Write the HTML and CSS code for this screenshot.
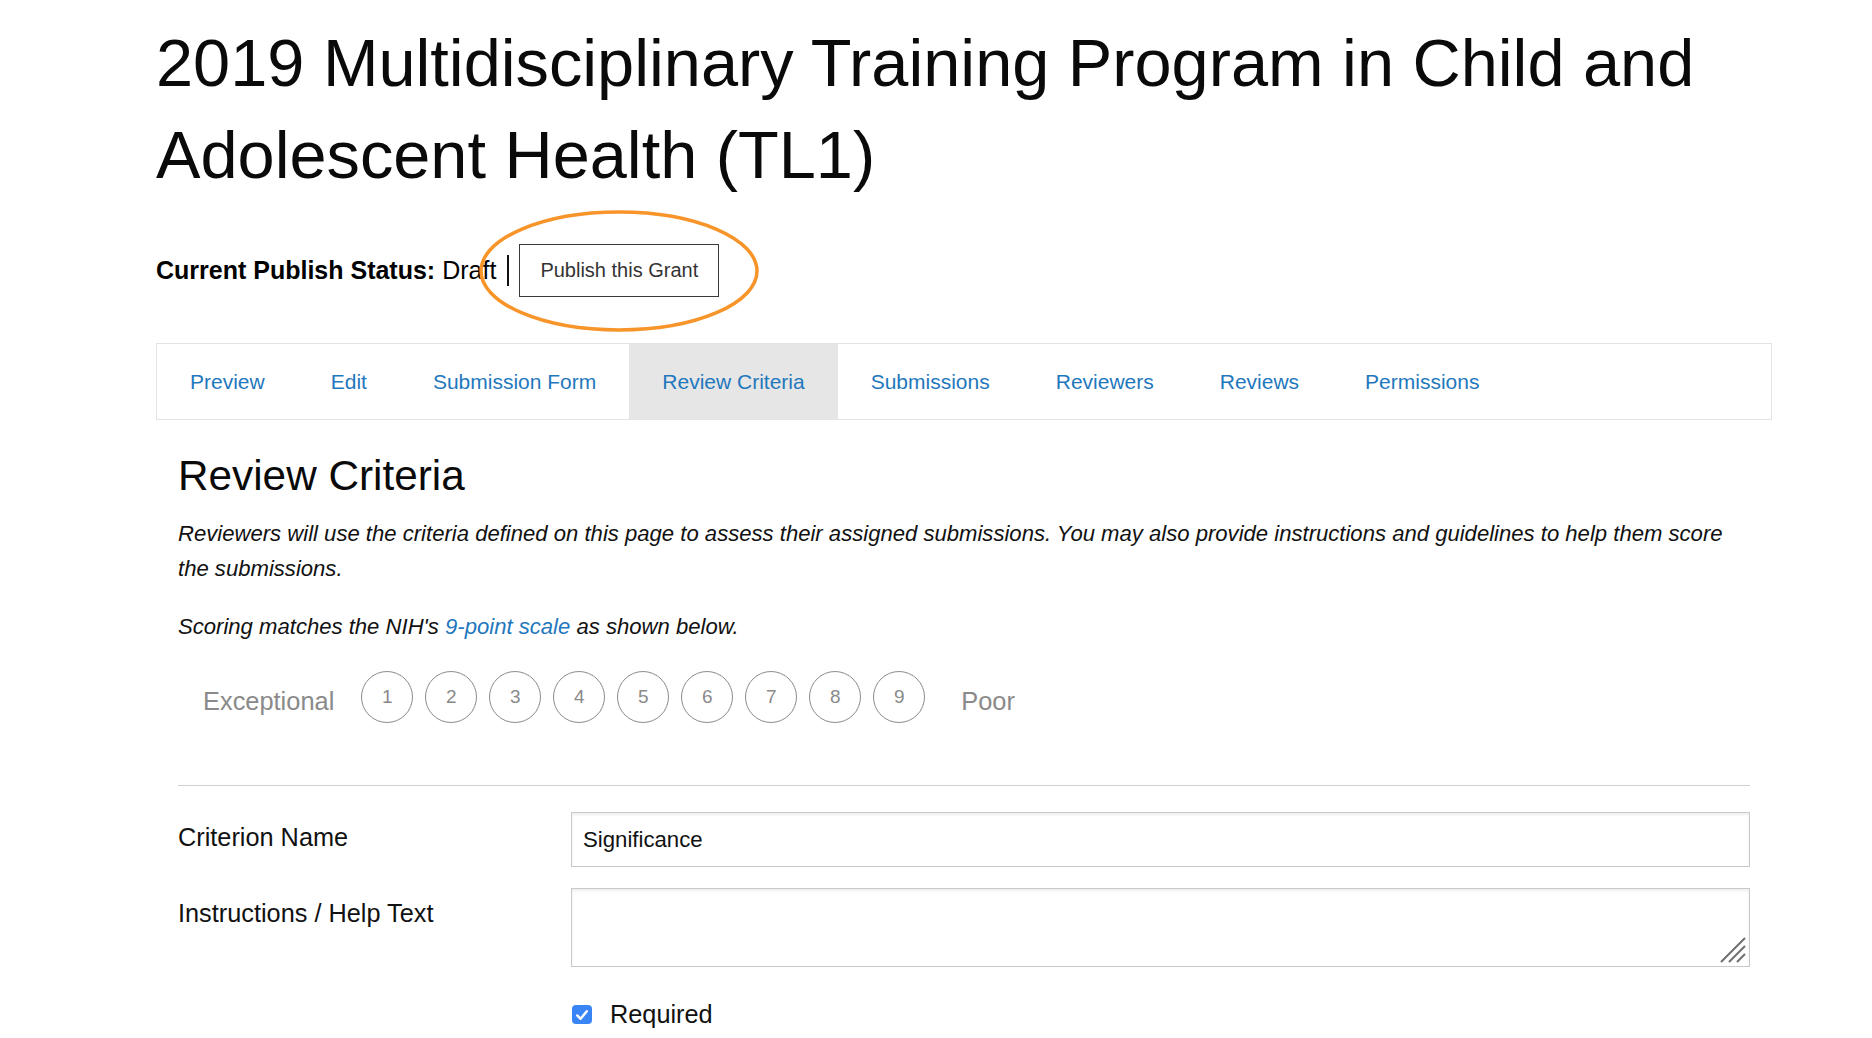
FILE: index.html
```html
<!DOCTYPE html>
<html>
<head>
<meta charset="utf-8">
<title>Review Criteria</title>
<link rel="stylesheet" href="styles.css">
</head>
<body>
<div class="page">
  <h1 class="title">2019 Multidisciplinary Training Program in Child and Adolescent Health (TL1)</h1>

  <div class="status">
    <span class="status-label">Current Publish Status:</span>
    <span class="status-value">Draft</span>
    <span class="sep"></span>
    <span class="publish-wrap">
      <button class="publish-btn" type="button">Publish this Grant</button>
      <svg class="highlight" viewBox="0 0 284 126" width="284" height="126" aria-hidden="true">
        <ellipse cx="142" cy="63" rx="138" ry="59" fill="none" stroke="#f7942a" stroke-width="3.5"/>
      </svg>
    </span>
  </div>

  <nav class="tabs">
    <a class="tab" href="#">Preview</a>
    <a class="tab" href="#">Edit</a>
    <a class="tab" href="#">Submission Form</a>
    <a class="tab active" href="#">Review Criteria</a>
    <a class="tab" href="#">Submissions</a>
    <a class="tab" href="#">Reviewers</a>
    <a class="tab" href="#">Reviews</a>
    <a class="tab" href="#">Permissions</a>
  </nav>

  <section class="content">
    <h2 class="section-title">Review Criteria</h2>
    <p class="intro">Reviewers will use the criteria defined on this page to assess their assigned submissions. You may also provide instructions and guidelines to help them score the submissions.</p>
    <p class="intro scoring">Scoring matches the NIH's <a class="link" href="#">9-point scale</a> as shown below.</p>

    <div class="scale">
      <span class="scale-label">Exceptional</span>
      <div class="dots">
        <span class="dot">1</span>
        <span class="dot">2</span>
        <span class="dot">3</span>
        <span class="dot">4</span>
        <span class="dot">5</span>
        <span class="dot">6</span>
        <span class="dot">7</span>
        <span class="dot">8</span>
        <span class="dot">9</span>
      </div>
      <span class="scale-label poor">Poor</span>
    </div>

    <hr class="divider">

    <div class="form-row first">
      <label class="form-label">Criterion Name</label>
      <input class="field" type="text" value="Significance">
    </div>
    <div class="form-row">
      <label class="form-label">Instructions / Help Text</label>
      <div class="area-wrap">
        <textarea class="field area"></textarea>
        <svg class="grip" viewBox="0 0 28 28" width="28" height="28" aria-hidden="true">
          <path d="M2 26 L26 2 M10 26 L26 10 M18 26 L26 18" stroke="#6f6f6f" stroke-width="2" fill="none"/>
        </svg>
      </div>
    </div>
    <div class="form-row">
      <span></span>
      <div class="check-row">
        <span class="checkbox">
          <svg viewBox="0 0 20 20" width="20" height="20" aria-hidden="true">
            <path d="M5.2 10.4 L8.6 13.8 L14.8 6.2" stroke="#fff" stroke-width="2.4" fill="none" stroke-linecap="round" stroke-linejoin="round"/>
          </svg>
        </span>
        <span class="check-label">Required</span>
      </div>
    </div>
  </section>
</div>
</body>
</html>
```

FILE: styles.css
```css
* { box-sizing: border-box; }

html, body {
  margin: 0;
  padding: 0;
  background: #fff;
}

body {
  font-family: "Liberation Sans", Arial, Helvetica, sans-serif;
  color: #111;
}

.page {
  margin-left: 156px;
  width: 1616px;
}

.title {
  margin: 17px 0 0 0;
  font-size: 66.7px;
  font-weight: 400;
  line-height: 92px;
  color: #0a0a0a;
}

.status {
  margin-top: 43px;
  display: flex;
  align-items: center;
  height: 53px;
  font-size: 25px;
}

.status-label {
  font-weight: 700;
  color: #000;
}

.status-value {
  margin-left: 7px;
  color: #000;
}

.sep {
  display: inline-block;
  width: 2px;
  height: 31px;
  background: #111;
  margin: 0 10px 0 11px;
}

.publish-wrap {
  position: relative;
  display: inline-block;
}

.publish-btn {
  display: block;
  height: 53px;
  padding: 0 20px;
  font-family: "Liberation Sans", Arial, sans-serif;
  font-size: 20px;
  color: #333;
  background: #fff;
  border: 1px solid #3a3a3a;
  border-radius: 0;
}

.highlight {
  position: absolute;
  left: 50%;
  top: 50%;
  transform: translate(-50%, -50%);
  pointer-events: none;
}

.tabs {
  margin-top: 46px;
  display: flex;
  border: 1px solid #e4e4e4;
  height: 77px;
}

.tab {
  display: block;
  padding: 0 33px;
  line-height: 76px;
  font-size: 21px;
  color: #1f78bd;
  text-decoration: none;
}

.tab.active {
  background: #e6e6e6;
}

.content {
  padding: 0 22px;
}

.section-title {
  margin: 31px 0 0 0;
  font-size: 42.3px;
  font-weight: 400;
  line-height: 50px;
  color: #0a0a0a;
}

.intro {
  margin: 15px 0 0 0;
  font-size: 22.1px;
  font-style: italic;
  line-height: 35px;
  color: #111;
}

.intro.scoring {
  margin-top: 23px;
}

.link {
  color: #1f78bd;
  text-decoration: none;
}

.scale {
  margin-top: 27px;
  padding-left: 25px;
  display: flex;
  align-items: center;
}

.scale-label {
  font-size: 25.4px;
  color: #8a8a8a;
  padding-top: 9px;
}

.dots {
  display: flex;
  gap: 12px;
  margin-left: 27px;
}

.dot {
  width: 52px;
  height: 52px;
  border: 1px solid #8c8c8c;
  border-radius: 50%;
  display: flex;
  align-items: center;
  justify-content: center;
  font-size: 19px;
  color: #8a8a8a;
  padding-bottom: 1px;
}

.scale-label.poor {
  margin-left: 36px;
}

.divider {
  margin: 62px 0 0 0;
  border: 0;
  border-top: 1px solid #d0d0d0;
  height: 0;
}

.form-row {
  display: grid;
  grid-template-columns: 393px 1fr;
  margin-top: 21px;
}

.form-row.first {
  margin-top: 26px;
}

.form-label {
  font-size: 25.3px;
  padding-top: 11px;
  color: #111;
}

.field {
  width: 100%;
  height: 55px;
  border: 1px solid #c9c9c9;
  box-shadow: inset 0 2px 3px rgba(0, 0, 0, 0.07);
  padding: 0 11px;
  font-family: "Liberation Sans", Arial, sans-serif;
  font-size: 22.2px;
  color: #111;
  background: #fff;
  outline: none;
  border-radius: 0;
}

.area-wrap {
  position: relative;
}

.area {
  display: block;
  height: 79px;
  resize: none;
}

.grip {
  position: absolute;
  right: 3px;
  bottom: 3px;
}

.check-row {
  display: flex;
  align-items: center;
  margin-top: 12px;
}

.checkbox {
  width: 20px;
  height: 19px;
  margin-left: 1px;
  background: #3a85f6;
  border-radius: 4px;
  display: flex;
  align-items: center;
  justify-content: center;
}

.checkbox svg {
  display: block;
}

.check-label {
  margin-left: 18px;
  font-size: 25.3px;
  color: #111;
}
```
